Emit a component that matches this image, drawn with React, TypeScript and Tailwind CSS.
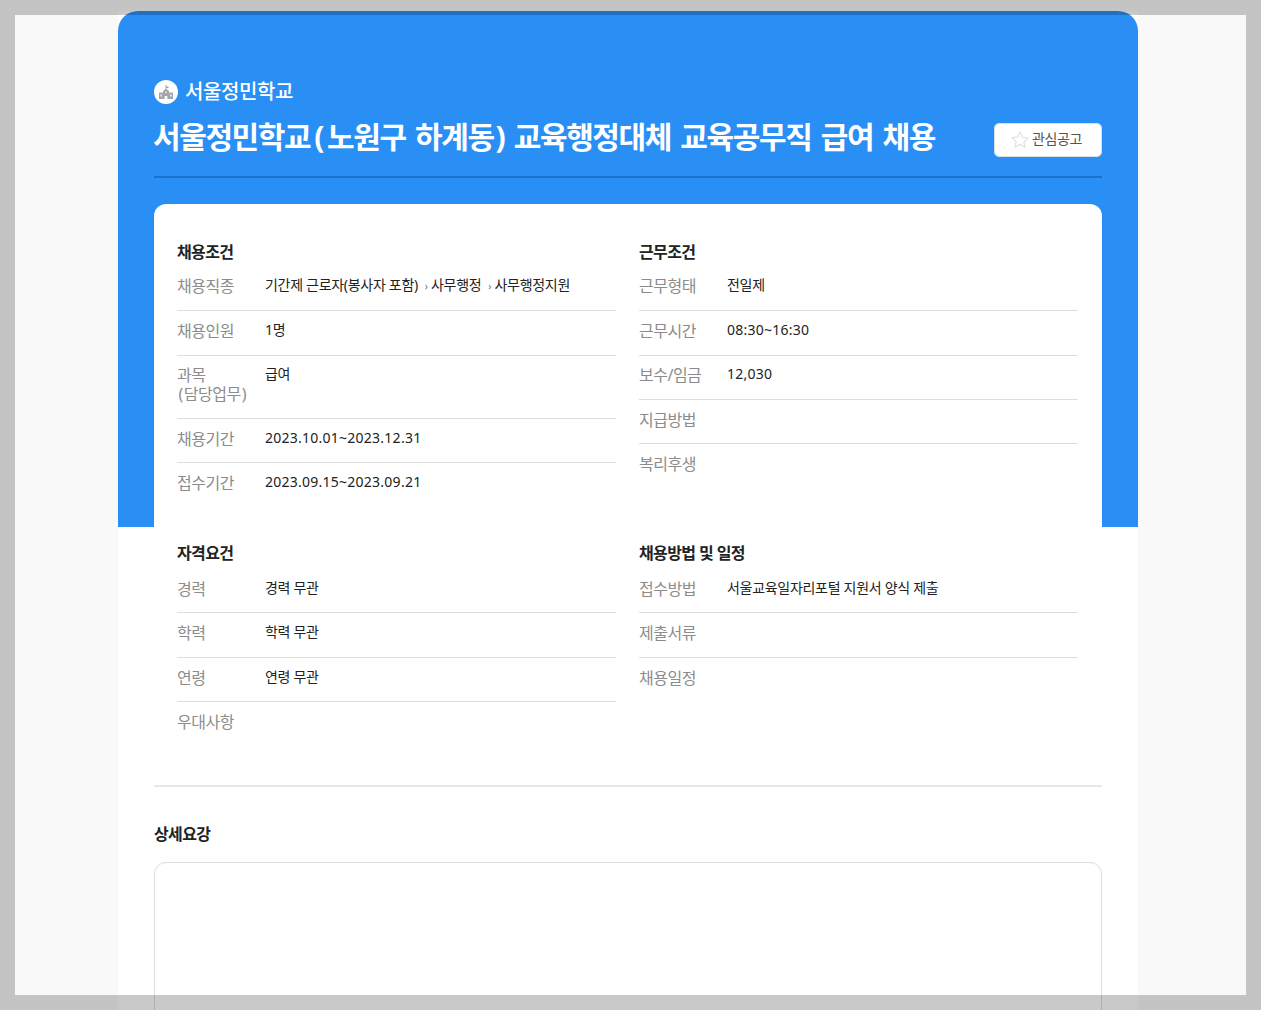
const font = { fontFamily: '"Noto Sans", "Noto Sans CJK KR", sans-serif' }

type Row = { label: React.ReactNode; value?: React.ReactNode }

function Chevron() {
  return <span className="mx-[3.5px] text-[10px] leading-none text-gray-500">›</span>
}

// digits sit wider than hangul in the original
function Num({ children }: { children: React.ReactNode }) {
  return <span className="tracking-[0.25px]">{children}</span>
}

function InfoTable({ title, rows, listClass }: { title: string; rows: Row[]; listClass: string }) {
  return (
    <div>
      <h3 className="text-[16px] leading-[22px] font-bold tracking-[-0.6px] text-[#222]">{title}</h3>
      <ul className={listClass}>
        {rows.map((row, i) => (
          <li
            key={i}
            className={`flex pt-[10.7px] pb-[13.7px] ${i < rows.length - 1 ? 'border-b border-[#dddddd]' : ''}`}
          >
            <div className="w-[88px] shrink-0 text-[16px] leading-[19px] tracking-[-0.5px] text-[#8c8c8c]">{row.label}</div>
            <div className="text-[14px] leading-[16px] tracking-[-0.3px] text-[#222]">{row.value}</div>
          </li>
        ))}
      </ul>
    </div>
  )
}

export default function App() {
  return (
    <div className="relative h-[1010px] overflow-hidden bg-[#f9f9f9] pt-[11px]" style={font}>
      <main className="relative ml-[118px] h-[1100px] w-[1020px] bg-white">
        <div className="absolute inset-x-0 top-0 h-[516px] rounded-t-[20px] bg-[#2a8ff5]" />
        <div className="relative px-[36px] pt-[68px]">
          <div className="flex items-center gap-[7px]">
            <span className="flex h-[24px] w-[24px] items-center justify-center rounded-full bg-white">
              <svg width="14" height="14" viewBox="0 0 14 14" fill="#a3a7ad" fillRule="evenodd">
                <path d="M6.500 0h1v1.500h2V3h-2v1L10 6v1.500h4V14H0V7.500h4V6l2.500-2zM5.700 14h2.600v-3H5.700zM1.500 9.500v2h1.200v-2zM11.300 9.500v2h1.200v-2zM6.400 6.500v1.400h1.200V6.500z" />
              </svg>
            </span>
            <span className="text-[20px] leading-[26px] font-medium tracking-[-0.4px] text-white">서울정민학교</span>
          </div>
          <div className="mt-[11px] flex items-end justify-between border-b-2 border-[#1b72cc] pb-[18px]">
            <h1 className="-ml-[1px] text-[30px] leading-[42px] font-bold tracking-[-1.4px] text-white [word-spacing:3px]">
              서울정민학교<span className="mx-[4px]">(</span>노원구 하계동<span className="ml-[2px]">)</span> 교육행정대체 교육공무직 급여 채용
            </h1>
            <button className="mb-[1px] flex h-[34px] w-[108px] items-center justify-center gap-[2px] rounded-[5px] border border-[#dddddd] bg-white pr-[4px] pb-[4px] text-[14px] tracking-[-0.4px] text-[#555]">
              <svg width="20" height="20" viewBox="0 0 24 24" fill="none" stroke="#e2e2e2" strokeWidth="1.500" strokeLinejoin="round" className="mt-[4px]">
                <path d="M12 2.500l2.900 6.300 6.800.8-5 4.700 1.300 6.800L12 17.200l-6 3.400 1.300-6.800-5-4.700 6.800-.8z" />
              </svg>
              관심공고
            </button>
          </div>

          <section className="mt-[26px] rounded-t-[12px] bg-white pt-[37px] pr-[24px] pl-[23px]">
            <div className="grid grid-cols-2 gap-x-[23px]">
              <InfoTable
                title="채용조건"
                listClass="mt-[3.8px]"
                rows={[
                  {
                    label: '채용직종',
                    value: (
                      <>
                        기간제 근로자(봉사자 포함) <Chevron />사무행정 <Chevron />사무행정지원
                      </>
                    ),
                  },
                  { label: '채용인원', value: '1명' },
                  {
                    label: (
                      <>
                        과목
                        <br />
                        <span className="mr-[1px] ml-[1.5px]">(</span>담당업무<span className="ml-[1px]">)</span>
                      </>
                    ),
                    value: '급여',
                  },
                  { label: '채용기간', value: <Num>2023.10.01~2023.12.31</Num> },
                  { label: '접수기간', value: <Num>2023.09.15~2023.09.21</Num> },
                ]}
              />
              <InfoTable
                title="근무조건"
                listClass="mt-[3.8px]"
                rows={[
                  { label: '근무형태', value: '전일제' },
                  { label: '근무시간', value: <Num>08:30~16:30</Num> },
                  { label: '보수/임금', value: <Num>12,030</Num> },
                  { label: '지급방법' },
                  { label: '복리후생' },
                ]}
              />
            </div>
            <div className="mt-[35px] grid grid-cols-2 gap-x-[23px]">
              <InfoTable
                title="자격요건"
                listClass="mt-[5.4px]"
                rows={[
                  { label: '경력', value: '경력 무관' },
                  { label: '학력', value: '학력 무관' },
                  { label: '연령', value: '연령 무관' },
                  { label: '우대사항' },
                ]}
              />
              <InfoTable
                title="채용방법 및 일정"
                listClass="mt-[5.4px]"
                rows={[
                  { label: '접수방법', value: '서울교육일자리포털 지원서 양식 제출' },
                  { label: '제출서류' },
                  { label: '채용일정' },
                ]}
              />
            </div>
          </section>

          <div className="mt-[39.4px] border-t-2 border-[#e8e8e8] pt-[36px]">
            <h3 className="text-[16px] leading-[22px] font-bold tracking-[-0.6px] text-[#222]">상세요강</h3>
            <div className="mt-[17px] h-[300px] rounded-[12px] border border-[#dddddd]" />
          </div>
        </div>
      </main>
      <div className="pointer-events-none absolute inset-0 border-[15px] border-[rgba(0,0,0,0.21)]" />
    </div>
  )
}
